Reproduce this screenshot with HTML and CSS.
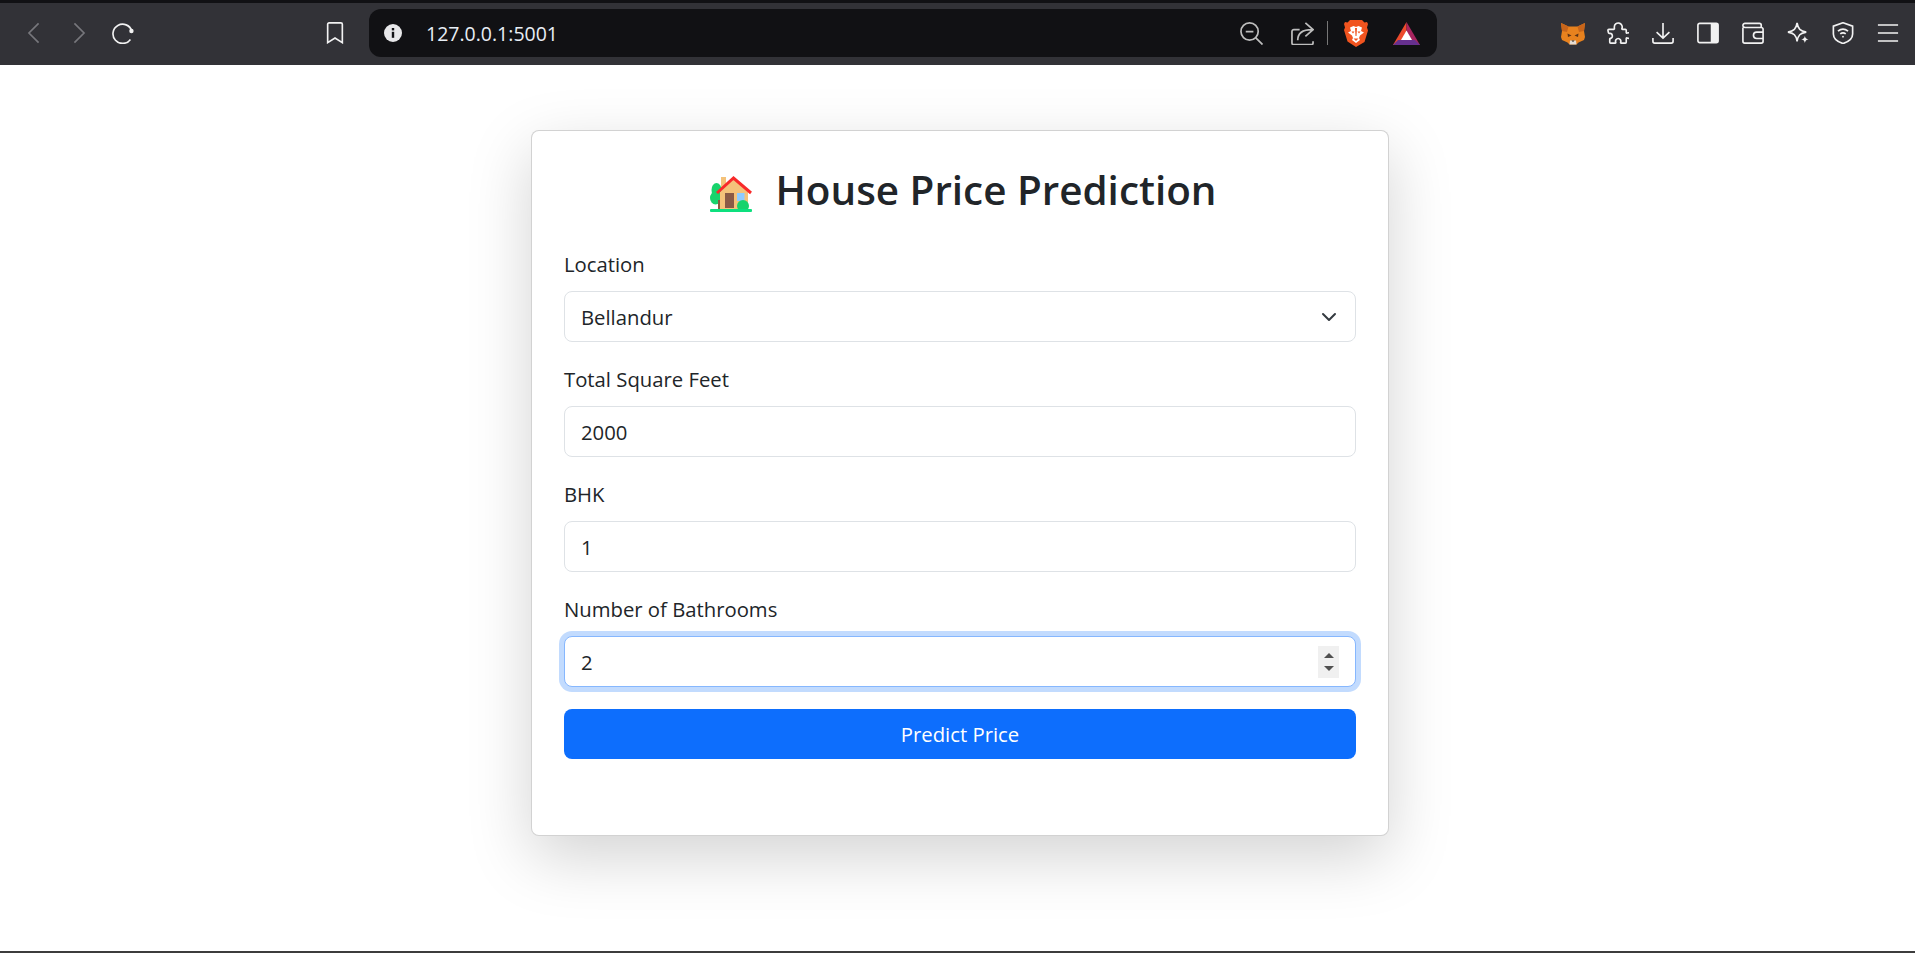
FILE: index.html
```html
<!DOCTYPE html>
<html lang="en">
<head>
<meta charset="utf-8">
<title>House Price Prediction</title>
<link rel="stylesheet" href="styles.css">
</head>
<body>
<header class="toolbar">
  <div class="nav-group">
    <svg class="ico dim" viewBox="0 0 24 24"><path d="M17 1.500 6.500 12 17 22.500"/></svg>
    <svg class="ico dim" viewBox="0 0 24 24"><path d="M7 1.500 17.500 12 7 22.500"/></svg>
    <svg class="ico" viewBox="0 0 24 24"><path d="M21.600 9.800A10.500 10.500 0 1 0 20.100 19"/><circle class="solid" cx="21.200" cy="9.800" r="2.400"/></svg>
  </div>
  <svg class="ico" viewBox="0 0 24 24"><path d="M5.500 1h13a1.500 1.500 0 0 1 1.500 1.500V22.500L12 17.500 4 22.500V2.500A1.500 1.500 0 0 1 5.500 1z"/></svg>
  <div class="address">
    <svg class="info" viewBox="0 0 20 20"><circle cx="10" cy="10" r="9"/><rect class="cut" x="8.800" y="8.800" width="2.400" height="6"/><rect class="cut" x="8.800" y="5" width="2.400" height="2.400"/></svg>
    <span class="url">127.0.0.1:5001</span>
    <div class="addr-right">
      <svg class="ico soft" viewBox="0 0 24 24"><circle cx="10" cy="10" r="9"/><path d="M6 10h8M16.500 16.500 23.500 23.500"/></svg>
      <svg class="ico soft share" viewBox="0 0 24 24"><path d="M9 8H3a2 2 0 0 0-2 2v12a1.500 1.500 0 0 0 1.500 1.500h19A1.500 1.500 0 0 0 23 22v-2M7 19c0-7 5-11 15-11M15 1l8 7-8 7"/></svg>
      <span class="divider"></span>
      <svg class="brave" viewBox="0 0 24 27"><path class="lion" d="M6 0h12l2.500 2.500 2.500-.500 1 2-1 3.500 1 3-3.500 11.500L12 27l-8.500-5.500L0 10l1-2.500L0 4l1-2 2.500.500z"/><path class="lion-face" d="M12 7 9.500 6 6 7.500 7 11l-3 1.500 4 3 1 2.500-1 2 4 3 4-3-1-2 1-2.500 4-3L17 11l1-3.500L14.500 6z"/><path class="lion-nose" d="M9.500 18.500h5L12 21z"/><path class="lion-nose" d="M7.500 11.500h3l-1.500 2zM13.500 11.500h3l-1.500 2zM11 8h2l-.5 8h-1z"/></svg>
      <svg class="bat" viewBox="0 0 27 23"><path class="bat-red" d="M13.500 0 0 23h7l6.500-12z"/><path class="bat-orange" d="M13.500 0v11L20 23h7z"/><path class="bat-purple" d="M0 23h27l-5-5H5z"/><path class="bat-white" d="M13.500 8.500 8 18h11z"/></svg>
    </div>
  </div>
  <div class="ext-group">
    <svg class="fox" viewBox="0 0 24 23"><path class="fox-a" d="M0 1l7.500 3.500h9L24 1l-1 8 1 6-1 3-5.500 2.500-2 2h-7l-2-2L1 18l-1-3 1-6z"/><path class="fox-e" d="M0 1l7.500 3.500L6 10 1 9zM24 1l-7.500 3.500L18 10l5-1z"/><path class="fox-b" d="M6.500 11.500l4 2-3.500 1.500zM17.500 11.500l-4 2 3.500 1.500z"/><path class="fox-c" d="M9 18.500h6l.5 4h-7z"/><path class="fox-d" d="M10.500 18.500h3L12 20z"/></svg>
    <svg class="ico" viewBox="0 0 24 24"><path d="M8 5.500a4.300 4.300 0 1 1 8.300 1.500c-.2.600 0 1 .7 1h3a1 1 0 0 1 1 1v2.500c0 .600.400.800 1 .600a3 3 0 1 1 0 5.300c-.600-.200-1 0-1 .600V22a1 1 0 0 1-1 1h-4.500c-.600 0-.800-.500-.600-1a2.900 2.900 0 1 0-5.400 0c.2.500 0 1-.6 1H4a1 1 0 0 1-1-1v-3.500c0-.600.500-.800 1-.500a3 3 0 0 0 0-5.600c-.5.300-2.500 0-2.500-.900L1 9c0-.600.500-1 1-1h5.500c.600 0 .700-.500.500-1z"/></svg>
    <svg class="ico" viewBox="0 0 24 24"><path d="M12 1v16M5 11l7 6.500 7-6.500M1 17.500V21a2 2 0 0 0 2 2h18a2 2 0 0 0 2-2v-3.500"/></svg>
    <svg class="ico" viewBox="0 0 24 24"><rect x="1" y="1.500" width="22" height="21" rx="2"/><rect class="solid" x="15" y="1.500" width="8" height="21"/></svg>
    <svg class="ico" viewBox="0 0 24 24"><path d="M1 6v15a2 2 0 0 0 2 2h18a2 2 0 0 0 2-2V8a2 2 0 0 0-2-2H3.500A2.300 2.300 0 0 1 1 3.800 2.300 2.300 0 0 1 3.500 1.500H19a2 2 0 0 1 2 2V6M23 11h-7a3 3 0 0 0 0 7h7"/></svg>
    <svg class="ico" viewBox="0 0 24 24"><path d="M11 1c1 6.500 3.500 9 10 10-6.500 1-9 3.500-10 10-1-6.500-3.500-9-10-10 6.500-1 9-3.500 10-10z"/><path class="solid" d="M19.500 15c.3 2.500 1.500 3.700 4 4-2.500.3-3.700 1.500-4 4-.3-2.500-1.500-3.700-4-4 2.500-.3 3.700-1.500 4-4z"/></svg>
    <svg class="ico" viewBox="0 0 24 24"><path d="M12 .8 22.500 4.500V13c0 5-4.500 8.500-10.500 10.500C6 21.500 1.500 18 1.500 13V4.500z"/><path d="M6.500 10c3.300-2.800 7.700-2.800 11 0M9 13c2-1.600 4-1.600 6 0"/><circle class="solid" cx="12" cy="16" r="1"/></svg>
    <svg class="ico" viewBox="0 0 24 24"><path d="M1 3.300h22M1 12h22M1 20.700h22"/></svg>
  </div>
</header>
<main class="page">
  <section class="card">
    <h1 class="title"><svg class="house" viewBox="0 0 42 36"><rect class="h-chimney" x="11" y="1" width="5" height="12"/><ellipse class="h-tree" cx="6.500" cy="14" rx="5" ry="7"/><ellipse class="h-tree" cx="5.500" cy="22" rx="5.500" ry="6.500"/><rect class="h-trunk" x="8" y="24" width="3" height="9"/><path class="h-wall" d="M10 16 23.500 3 38 16v17H10z"/><rect class="h-door" x="15" y="17" width="9" height="15"/><rect class="h-win" x="27" y="17" width="7.500" height="8"/><path class="h-roof" d="M7 17 23.500 2 41 17"/><circle class="h-tree" cx="33" cy="30" r="6"/><rect class="h-ground" x="0" y="33" width="42" height="3" rx="1"/></svg><span>House Price Prediction</span></h1>
    <form class="form">
      <div class="field">
        <label class="label">Location</label>
        <div class="control">
          <span>Bellandur</span>
          <svg class="chev" viewBox="0 0 16 16"><path d="m2 5 6 6 6-6"/></svg>
        </div>
      </div>
      <div class="field">
        <label class="label">Total Square Feet</label>
        <div class="control">2000</div>
      </div>
      <div class="field">
        <label class="label">BHK</label>
        <div class="control">1</div>
      </div>
      <div class="field field-last">
        <label class="label">Number of Bathrooms</label>
        <div class="control focused">
          <span>2</span>
          <span class="spinner"><i class="up"></i><i class="down"></i></span>
        </div>
      </div>
      <button type="button" class="submit">Predict Price</button>
    </form>
  </section>
</main>
</body>
</html>
```
FILE: styles.css
```css
* { box-sizing: border-box; }
html, body { margin: 0; height: 100%; }
body {
  height: 953px;
  overflow: hidden;
  background: #fff;
  color: #212529;
  font-family: "Open Sans", "Noto Sans", sans-serif;
  display: flex;
  flex-direction: column;
  border-bottom: 2px solid #3c3c3c;
}
.toolbar {
  height: 65px;
  flex: none;
  background: #323237;
  border-top: 3px solid #111114;
  display: flex;
  align-items: center;
  padding: 0 16px 2px 23px;
  color: #fff;
}
.nav-group { display: flex; align-items: center; gap: 22.5px; width: 301px; flex: none; }
.ico { width: 22px; height: 22px; fill: none; stroke: #f2f2f2; stroke-width: 1.8; flex: none; }
.ico .solid { fill: #f2f2f2; stroke: none; }
.ico.dim { stroke: #77777c; }
.ico.soft { stroke: #bdbdbd; }
.address {
  margin-left: 23px;
  width: 1068px;
  height: 48px;
  background: #111114;
  border-radius: 12px;
  display: flex;
  align-items: center;
  padding: 0 17px 0 14px;
  flex: none;
}
.info { width: 20px; height: 20px; fill: #e8e8ea; flex: none; }
.info .cut { fill: #111114; }
.url { margin-left: 23px; font-size: 19.500px; color: #e8eef5; }
.addr-right { margin-left: auto; display: flex; align-items: center; }
.addr-right .ico { width: 23px; height: 23px; }
.share { margin-left: 28px; }
.divider { width: 1px; height: 24px; background: #777; margin: 0 16px 0 13px; }
.brave { width: 24px; height: 27px; flex: none; }
.bat { width: 27px; height: 23px; margin-left: 25px; flex: none; }
.lion { fill: #f1541f; }
.lion-face { fill: #fff; }
.lion-nose { fill: #f1541f; }
.bat-red { fill: #ec4a2c; }
.bat-orange { fill: #a8255f; }
.bat-purple { fill: #66308f; }
.bat-white { fill: #fff; }
.ext-group { margin-left: auto; display: flex; align-items: center; gap: 23px; }
.fox { width: 24px; height: 23px; margin: 0 -1px; flex: none; }
.fox-a { fill: #e8821e; }
.fox-e { fill: #c8651a; }
.fox-b { fill: #5a3216; }
.fox-c { fill: #e4ddd4; }
.fox-d { fill: #222; }
.page { flex: 1; display: flex; justify-content: center; padding: 65px 0 0 5px; background: #fff; }
.card {
  width: 858px;
  height: 706px;
  padding: 32px;
  background: #fff;
  border: 1px solid rgba(0,0,0,.175);
  border-radius: 8px;
  box-shadow: 0 21px 64px rgba(0,0,0,.175);
}
.title {
  margin: 0 0 32px;
  padding-left: 6px;
  font-size: 40.400px;
  font-weight: 600;
  line-height: 53px;
  display: flex;
  justify-content: center;
  align-items: center;
}
.house { width: 42px; height: 36px; margin: 8px 24px 0 0; flex: none; }
.h-chimney { fill: #f4c27a; }
.h-tree { fill: #18d36c; }
.h-trunk { fill: #8a5a3c; }
.h-wall { fill: #f4c27a; }
.h-door { fill: #8a5a46; }
.h-win { fill: #8fcbff; }
.h-roof { fill: none; stroke: #f82a2a; stroke-width: 3; }
.h-ground { fill: #0de07e; }
.form { display: flex; flex-direction: column; }
.field { margin-bottom: 21px; }
.field-last { margin-bottom: 22px; }
.label { display: block; margin-bottom: 11px; font-size: 20.300px; line-height: 32px; }
.control {
  height: 51px;
  border: 1px solid #dee2e6;
  border-radius: 8px;
  padding: 0 16px;
  font-size: 20.300px;
  display: flex;
  align-items: center;
  justify-content: space-between;
  background: #fff;
}
.chev { width: 16px; height: 16px; fill: none; stroke: #343a40; stroke-width: 2; stroke-linecap: round; stroke-linejoin: round; margin-right: 2px; }
.focused { border-color: #86b7fe; box-shadow: 0 0 0 5px rgba(13,110,253,.25); }
.spinner { width: 21px; height: 32px; background: #f0f0f0; display: flex; flex-direction: column; align-items: center; justify-content: center; gap: 8px; }
.up, .down { width: 0; height: 0; border-left: 5px solid transparent; border-right: 5px solid transparent; }
.up { border-bottom: 5px solid #505050; }
.down { border-top: 5px solid #505050; }
.submit {
  height: 50px;
  border: 0;
  border-radius: 8px;
  background: #0d6efd;
  color: #fff;
  font-size: 20.300px;
  font-family: inherit;
}
```
